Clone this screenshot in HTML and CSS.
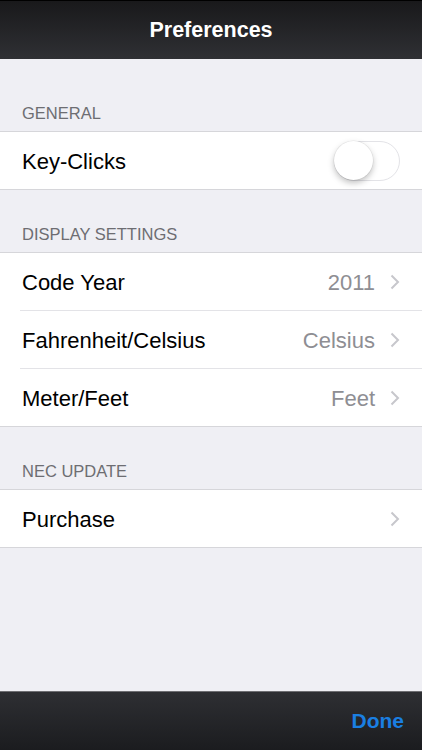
FILE: index.html
```html
<!DOCTYPE html>
<html>
<head>
<meta charset="utf-8">
<link rel="stylesheet" href="styles.css">
</head>
<body>
<div class="screen">
  <header class="navbar"><span class="title">Preferences</span></header>
  <main class="content">
    <div class="section-header first">GENERAL</div>
    <div class="group">
      <div class="row">
        <div class="row-inner">
          <span class="label">Key-Clicks</span>
          <span class="switch"><span class="knob"></span></span>
        </div>
      </div>
    </div>

    <div class="section-header">DISPLAY SETTINGS</div>
    <div class="group">
      <div class="row">
        <div class="row-inner">
          <span class="label">Code Year</span>
          <span class="value">2011</span>
          <svg class="chev" width="10" height="16" viewBox="0 0 10 16"><path d="M1.5 1.5 L8 8 L1.5 14.5" fill="none" stroke="#c7c7cc" stroke-width="2"/></svg>
        </div>
      </div>
      <div class="row">
        <div class="row-inner">
          <span class="label">Fahrenheit/Celsius</span>
          <span class="value">Celsius</span>
          <svg class="chev" width="10" height="16" viewBox="0 0 10 16"><path d="M1.5 1.5 L8 8 L1.5 14.5" fill="none" stroke="#c7c7cc" stroke-width="2"/></svg>
        </div>
      </div>
      <div class="row">
        <div class="row-inner">
          <span class="label">Meter/Feet</span>
          <span class="value">Feet</span>
          <svg class="chev" width="10" height="16" viewBox="0 0 10 16"><path d="M1.5 1.5 L8 8 L1.5 14.5" fill="none" stroke="#c7c7cc" stroke-width="2"/></svg>
        </div>
      </div>
    </div>

    <div class="section-header">NEC UPDATE</div>
    <div class="group">
      <div class="row">
        <div class="row-inner">
          <span class="label">Purchase</span>
          <svg class="chev" width="10" height="16" viewBox="0 0 10 16"><path d="M1.5 1.5 L8 8 L1.5 14.5" fill="none" stroke="#c7c7cc" stroke-width="2"/></svg>
        </div>
      </div>
    </div>
  </main>
  <footer class="toolbar"><span class="done">Done</span></footer>
</div>
</body>
</html>
```
FILE: styles.css
```css
* { box-sizing: border-box; }
html, body { margin: 0; padding: 0; }
body {
  font-family: "Liberation Sans", Arial, sans-serif;
  background: #efeff4;
}
.screen {
  width: 422px;
  height: 750px;
  display: flex;
  flex-direction: column;
  overflow: hidden;
}
.navbar {
  height: 59px;
  flex: none;
  border-top: 1px solid #000;
  background: linear-gradient(#19191b, #2f3034);
  display: flex;
  align-items: center;
  justify-content: center;
  padding-top: 1px;
}
.title {
  color: #fff;
  font-weight: bold;
  font-size: 21.5px;
}
.content {
  flex: 1;
}
.section-header {
  font-size: 16.5px;
  line-height: 20px;
  color: #6d6d72;
  padding: 34px 0 8px 22px;
  height: 62px;
}
.section-header.first {
  padding-top: 44px;
  height: 72px;
}
.group {
  background: #fff;
  border-top: 1px solid #d6d6da;
  border-bottom: 1px solid #d6d6da;
}
.row-inner {
  margin-left: 20px;
  height: 57px;
  display: flex;
  align-items: center;
  padding: 2px 22px 0 2px;
}
.row + .row .row-inner {
  border-top: 1px solid #e3e3e7;
  height: 58px;
}
.label {
  flex: 1;
  font-size: 22px;
  color: #000;
}
.value {
  font-size: 22px;
  color: #8e8e93;
  margin-right: 15px;
}
.chev {
  display: block;
  flex: none;
  margin-top: -2px;
}
.switch {
  width: 66px;
  height: 40px;
  border-radius: 20px;
  border: 1.5px solid #e3e3e7;
  background: #fff;
  position: relative;
  display: block;
  margin-top: -2px;
}
.knob {
  position: absolute;
  left: -1px;
  top: -1px;
  width: 39px;
  height: 39px;
  border-radius: 50%;
  background: #fff;
  box-shadow: 0 3px 6px rgba(0,0,0,0.25), 0 0 0 0.5px rgba(0,0,0,0.08);
}
.toolbar {
  height: 59px;
  flex: none;
  border-top: 1px solid #6e6e72;
  background: linear-gradient(#2e2f33, #1b1c1f);
  display: flex;
  align-items: center;
  justify-content: flex-end;
  padding-right: 18px;
}
.done {
  color: #1a7fe2;
  font-weight: bold;
  font-size: 21px;
}
```
